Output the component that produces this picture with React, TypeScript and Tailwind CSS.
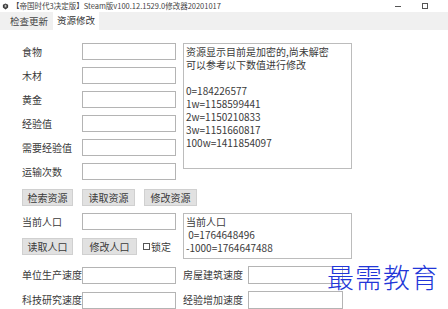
import React from 'react';

const font = { fontFamily: '"Noto Sans CJK SC", "Noto Sans", sans-serif' };

const Field = ({ label }: { label: string }) => (
  <div className="flex items-center h-[17px]">
    <span className="w-[60px] text-[10px] leading-none text-[#3a3a3a] whitespace-nowrap">{label}</span>
    <div className="w-[94px] h-[17px] border border-[#b4b4b4] bg-white" />
  </div>
);

const Btn = ({ children, w = 'w-[52px]' }: { children: React.ReactNode; w?: string }) => (
  <button
    className={`${w} h-[17px] bg-[#e1e1e1] border border-[#d0d0d0] text-[10px] leading-none text-[#3a3a3a] flex items-center justify-center`}
  >
    {children}
  </button>
);

const App: React.FC = () => {
  return (
    <div
      className="relative w-[448px] h-[309px] overflow-hidden bg-white text-[#333]"
      style={font}
    >
      {/* Title bar */}
      <div className="h-[12px] flex items-center bg-white">
        <svg className="ml-[2px] w-[7px] h-[7px]" viewBox="0 0 8 8">
          <path d="M1 2 L4 0.5 L7 2 L7 5 L4 7.5 L1 5 Z" fill="#3a3a3a" />
          <rect x="3" y="2" width="2" height="3" fill="#bbb" />
        </svg>
        <span className="ml-[3px] text-[7.5px] leading-none text-[#444] whitespace-nowrap">
          【帝国时代3决定版】Steam版v100.12.1529.0修改器20201017
        </span>
        <div className="ml-auto flex items-center h-full">
          <div className="w-[6px] h-px bg-[#555] mr-[21px]" />
          <div className="w-[6px] h-[6px] border border-[#555] mr-[20px]" />
        </div>
      </div>

      {/* Tabs */}
      <div className="h-[18px] bg-[#f0f0f0] flex items-end pl-[10px]">
        <div className="h-[17px] flex items-center text-[9.5px] leading-none text-[#444] pr-[5px]">检查更新</div>
        <div className="h-[18px] px-[4px] bg-white flex items-center text-[9.5px] leading-none text-[#333]">
          资源修改
        </div>
      </div>

      {/* Content */}
      <div className="pl-[22px] pt-[13px]">
        <div className="flex gap-[7px] items-start">
          <div className="flex flex-col gap-[7px]">
            <Field label="食物" />
            <Field label="木材" />
            <Field label="黄金" />
            <Field label="经验值" />
            <Field label="需要经验值" />
            <Field label="运输次数" />
          </div>
          <div className="w-[169px] h-[126px] border border-[#bcbcbc] px-[2px] pt-[1px] text-[10px] leading-[13px] text-[#3a3a3a] whitespace-pre">
            {'资源显示目前是加密的,尚未解密\n可以参考以下数值进行修改\n\n0=184226577\n1w=1158599441\n2w=1150210833\n3w=1151660817\n100w=1411854097'}
          </div>
        </div>

        <div className="mt-[9px] flex gap-[9px]">
          <Btn w="w-[51px]">检索资源</Btn>
          <Btn w="w-[53px]">读取资源</Btn>
          <Btn w="w-[53px]">修改资源</Btn>
        </div>

        <div className="mt-[7px] flex gap-[7px] items-start">
          <div className="flex flex-col gap-[8px]">
            <Field label="当前人口" />
            <div className="flex items-center gap-[9px]">
              <Btn w="w-[51px]">读取人口</Btn>
              <Btn w="w-[55px]">修改人口</Btn>
              <div className="flex items-center -ml-[3px]">
                <div className="w-[7px] h-[7px] border border-[#555] bg-white" />
                <span className="ml-[1px] text-[10px] leading-none text-[#3a3a3a]">锁定</span>
              </div>
            </div>
          </div>
          <div className="w-[169px] h-[46px] border border-[#bcbcbc] px-[2px] pt-[1px] text-[10px] leading-[13px] text-[#3a3a3a] whitespace-pre">
            {'当前人口\n 0=1764648496\n-1000=1764647488'}
          </div>
        </div>

        <div className="mt-[7px] flex flex-col gap-[7px]">
          <div className="flex gap-[7px] items-center">
            <Field label="单位生产速度" />
            <div className="flex items-center">
              <span className="w-[65px] text-[10px] leading-none text-[#3a3a3a] whitespace-nowrap">房屋建筑速度</span>
              <div className="w-[95px] h-[18px] border border-[#b4b4b4]" />
            </div>
          </div>
          <div className="flex gap-[7px] items-center">
            <Field label="科技研究速度" />
            <div className="flex items-center">
              <span className="w-[65px] text-[10px] leading-none text-[#3a3a3a] whitespace-nowrap">经验增加速度</span>
              <div className="w-[95px] h-[18px] border border-[#b4b4b4]" />
            </div>
          </div>
        </div>
      </div>

      {/* Watermark */}
      <div
        className="absolute left-[327px] top-[263px] text-[27px] leading-none tracking-[1px] text-[#2236d8] whitespace-nowrap"
        style={{ fontFamily: '"Noto Sans CJK SC", serif', fontWeight: 300 }}
      >
        最需教育
      </div>
    </div>
  );
};

export default App;
